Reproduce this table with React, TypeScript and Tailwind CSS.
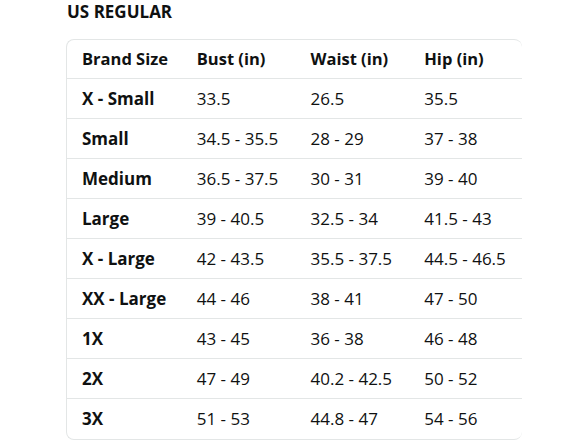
import React from "react";

const rows: string[][] = [
  ["X - Small", "33.5", "26.5", "35.5"],
  ["Small", "34.5 - 35.5", "28 - 29", "37 - 38"],
  ["Medium", "36.5 - 37.5", "30 - 31", "39 - 40"],
  ["Large", "39 - 40.5", "32.5 - 34", "41.5 - 43"],
  ["X - Large", "42 - 43.5", "35.5 - 37.5", "44.5 - 46.5"],
  ["XX - Large", "44 - 46", "38 - 41", "47 - 50"],
  ["1X", "43 - 45", "36 - 38", "46 - 48"],
  ["2X", "47 - 49", "40.2 - 42.5", "50 - 52"],
  ["3X", "51 - 53", "44.8 - 47", "54 - 56"],
];

export default function App() {
  return (
    <div
      className="w-[588px] h-[441px] bg-white overflow-hidden text-[#0f1111]"
      style={{ fontFamily: '"Open Sans", "Noto Sans", sans-serif' }}
    >
      <div className="mx-auto w-[456px]">
        <div className="h-[39px] text-[17px] font-bold leading-[24px] pl-[1px]">US REGULAR</div>
        <div className="border border-[#e3e6e6] border-r-0 rounded-[8px]">
          <div className="grid grid-cols-4 h-[39px] items-center border-b border-[#e3e6e6] text-[16.5px] font-bold">
            <div className="pl-[15px]">Brand Size</div>
            <div className="pl-[16px]">Bust (in)</div>
            <div className="pl-[16px]">Waist (in)</div>
            <div className="pl-[16px]">Hip (in)</div>
          </div>
          {rows.map((r, i) => (
            <div
              key={i}
              className={`grid grid-cols-4 h-[40px] items-center text-[17px] ${i < rows.length - 1 ? "border-b border-[#e3e6e6]" : ""}`}
            >
              <div className="pl-[15px] font-bold">{r[0]}</div>
              <div className="pl-[16px]">{r[1]}</div>
              <div className="pl-[16px]">{r[2]}</div>
              <div className="pl-[16px]">{r[3]}</div>
            </div>
          ))}
        </div>
      </div>
    </div>
  );
}
